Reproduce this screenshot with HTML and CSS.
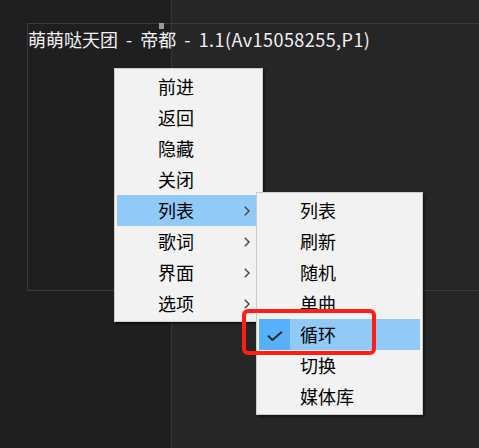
FILE: index.html
```html
<!DOCTYPE html>
<html lang="zh-CN">
<head>
<meta charset="utf-8">
<title>菜单</title>
<link rel="stylesheet" href="styles.css">
</head>
<body>
<div class="desktop">
  <div class="pane-left"></div>
  <div class="pane-right"></div>

  <div class="lyric-window">
    <div class="title">萌萌哒天团 - 帝都 - <span class="latin">1.1(Av15058255,P1)</span></div>
  </div>
  <div class="grip"></div>

  <div class="menu menu-main">
    <div class="item"><span class="ico"></span><span class="label">前进</span></div>
    <div class="item"><span class="ico"></span><span class="label">返回</span></div>
    <div class="item"><span class="ico"></span><span class="label">隐藏</span></div>
    <div class="item"><span class="ico"></span><span class="label">关闭</span></div>
    <div class="item hot"><span class="ico"></span><span class="label">列表</span><svg class="arrow" viewBox="0 0 6 10"><path d="M0.8 0.8 L5 5 L0.8 9.2" /></svg></div>
    <div class="item"><span class="ico"></span><span class="label">歌词</span><svg class="arrow" viewBox="0 0 6 10"><path d="M0.8 0.8 L5 5 L0.8 9.2" /></svg></div>
    <div class="item"><span class="ico"></span><span class="label">界面</span><svg class="arrow" viewBox="0 0 6 10"><path d="M0.8 0.8 L5 5 L0.8 9.2" /></svg></div>
    <div class="item"><span class="ico"></span><span class="label">选项</span><svg class="arrow" viewBox="0 0 6 10"><path d="M0.8 0.8 L5 5 L0.8 9.2" /></svg></div>
  </div>

  <div class="menu menu-sub">
    <div class="item"><span class="ico"></span><span class="label">列表</span></div>
    <div class="item"><span class="ico"></span><span class="label">刷新</span></div>
    <div class="item"><span class="ico"></span><span class="label">随机</span></div>
    <div class="item"><span class="ico"></span><span class="label">单曲</span></div>
    <div class="item hot checked"><span class="ico"><svg class="check" viewBox="0 0 16 10"><path d="M1 4.6 L5.4 9 L15 0.8" /></svg></span><span class="label">循环</span></div>
    <div class="item"><span class="ico"></span><span class="label">切换</span></div>
    <div class="item"><span class="ico"></span><span class="label">媒体库</span></div>
  </div>

  <div class="mark"></div>
</div>
</body>
</html>
```

FILE: styles.css
```css
html, body {
  margin: 0;
  padding: 0;
  width: 479px;
  height: 448px;
  overflow: hidden;
  background: #1f1f1f;
  font-family: "Noto Sans CJK SC", "Noto Sans", sans-serif;
}

.desktop {
  position: relative;
  width: 479px;
  height: 448px;
  display: flex;
}

.pane-left {
  width: 171px;
  background: #1f1f1f;
  border-right: 1px solid #363636;
}

.pane-right {
  flex: 1;
  background: #262626;
}

.lyric-window {
  position: absolute;
  left: 27px;
  top: 23px;
  width: 470px;
  height: 266px;
  border: 1px solid #3a3a3a;
}

.title {
  margin-top: 2px;
  font-size: 18px;
  line-height: 26px;
  color: #f2f2f2;
  white-space: nowrap;
  word-spacing: 4px;
}

.latin {
  letter-spacing: 0.45px;
}

.grip {
  position: absolute;
  left: 159px;
  top: 23px;
  width: 5px;
  height: 6px;
  background: #9a9a9a;
}

.menu {
  position: absolute;
  box-sizing: border-box;
  background: #f2f2f2;
  border: 1px solid #cccccc;
  padding: 2px;
  box-shadow: 2px 2px 2px rgba(0, 0, 0, 0.45);
  display: flex;
  flex-direction: column;
}

.menu-main {
  left: 114px;
  top: 68px;
  width: 149px;
  height: 254px;
}

.menu-sub {
  left: 256px;
  top: 192px;
  width: 167px;
  height: 223px;
}

.item {
  height: 31px;
  display: flex;
  align-items: center;
  font-size: 18px;
  color: #000;
}

.item.hot {
  background: #91c9f7;
}

.ico {
  width: 31px;
  height: 31px;
  margin-right: 10px;
  display: flex;
  align-items: center;
  justify-content: center;
  flex: none;
}

.item.checked .ico {
  background: #56b0fa;
}

.label {
  flex: 1;
  line-height: 31px;
  white-space: nowrap;
}

.arrow {
  width: 6px;
  height: 10px;
  margin-right: 10px;
  fill: none;
  stroke: #444;
  stroke-width: 1.4;
}

.check {
  width: 16px;
  height: 10px;
  margin-top: 2px;
  fill: none;
  stroke: #2b2b2b;
  stroke-width: 2;
}

.mark {
  position: absolute;
  left: 242px;
  top: 309px;
  width: 134px;
  height: 46px;
  box-sizing: border-box;
  border: 4px solid #ff1e14;
  border-radius: 6px;
}
```
